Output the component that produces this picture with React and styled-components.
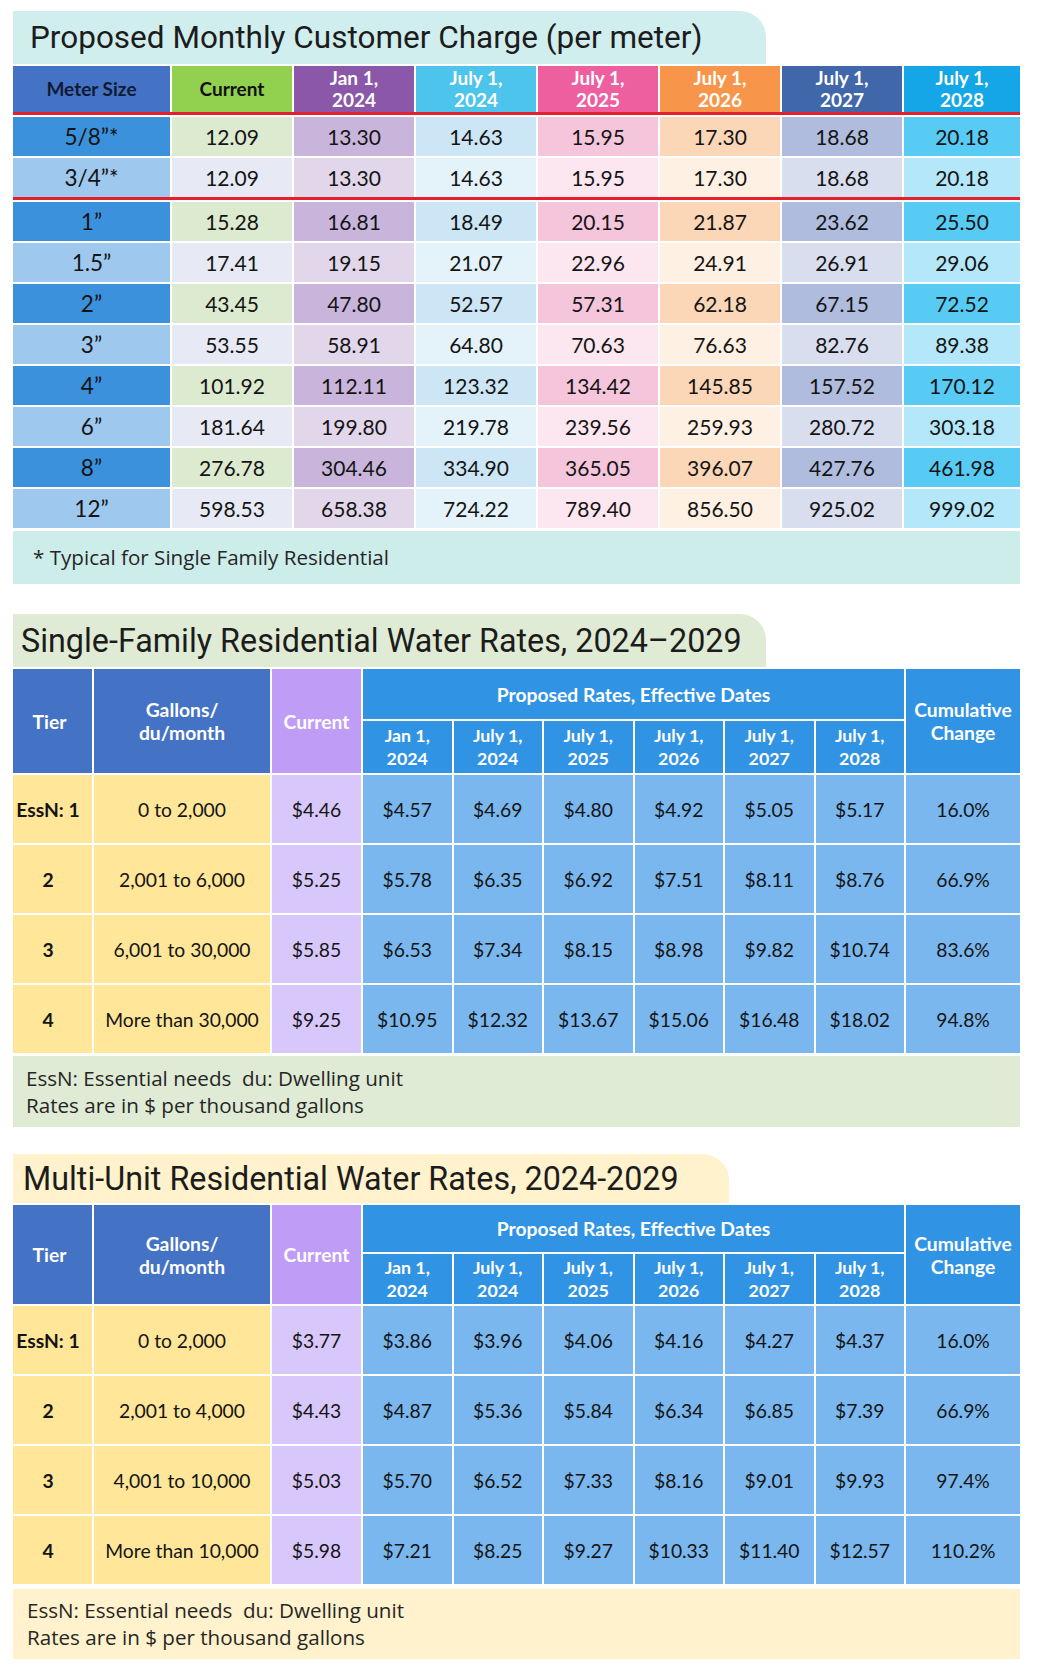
import styled, { createGlobalStyle } from "styled-components";

const GlobalStyle = createGlobalStyle`
  body {
    margin: 0;
    background: #fff;
    font-family: Lato, "Liberation Sans", sans-serif;
    color: #141414;
  }
`;

const Page = styled.div`
  width: 1039px;
  box-sizing: border-box;
  padding: 11px 19px 16px 13px;
  display: flex;
  flex-direction: column;
`;

const Section = styled.section`
  display: flex;
  flex-direction: column;
  margin-top: ${p => p.$gap || 0}px;
`;

const TitleTab = styled.h2`
  margin: 0 0 2px;
  width: ${p => p.$width}px;
  height: ${p => p.$height}px;
  box-sizing: border-box;
  padding-left: ${p => p.$indent}px;
  background: ${p => p.$bg};
  border-top-right-radius: 26px;
  display: flex;
  align-items: center;
  font-family: Roboto, "Liberation Sans", sans-serif;
  font-weight: 400;
  font-size: ${p => p.$size}px;
  color: #1c1c1c;
  white-space: nowrap;
`;

const Note = styled.div`
  margin-top: ${p => p.$gap}px;
  height: ${p => p.$height}px;
  box-sizing: border-box;
  padding-left: ${p => p.$indent}px;
  background: ${p => p.$bg};
  display: flex;
  flex-direction: column;
  justify-content: center;
  font-family: "Open Sans", "Liberation Sans", sans-serif;
  font-size: 20.6px;
  line-height: 27px;
  color: #262626;
`;

/* ---------- customer charge table ---------- */

const chargeColumns = "157px repeat(6, 120px) 116px";

const ChargeRow = styled.div`
  display: grid;
  grid-template-columns: ${chargeColumns};
  column-gap: 2px;
  height: ${p => p.$height}px;
  margin-top: ${p => p.$gap || 0}px;
`;

const ChargeHead = styled.div`
  background: ${p => p.$bg};
  color: ${p => p.$color};
  font-weight: 700;
  font-size: 19px;
  line-height: 22px;
  text-align: center;
  display: flex;
  align-items: ${p => (p.$twoLine ? "flex-start" : "center")};
  justify-content: center;
  padding-top: ${p => (p.$twoLine ? 1 : 0)}px;
  box-sizing: border-box;
`;

const ChargeCell = styled.div`
  background: ${p => p.$bg};
  display: flex;
  align-items: center;
  justify-content: center;
  font-size: ${p => (p.$label ? 22.5 : 21)}px;
  color: #141414;
`;

const RedRule = styled.div`
  height: 3px;
  background: #e3202b;
`;

/* ---------- tiered rate tables ---------- */

const rateColumns = "79px 176px 89px repeat(6, 1fr) 114px";

const RateHeadGrid = styled.div`
  display: grid;
  grid-template-columns: ${rateColumns};
  grid-template-rows: ${p => p.$rows};
  gap: 2px;
`;

const RateHead = styled.div`
  grid-row: ${p => (p.$tall ? "span 2" : "auto")};
  grid-column: ${p => (p.$wide ? "span 6" : "auto")};
  background: ${p => p.$bg};
  color: #fff;
  font-weight: 700;
  font-size: ${p => p.$size || 19.3}px;
  line-height: 23px;
  text-align: center;
  display: flex;
  align-items: center;
  justify-content: center;
  padding-right: ${p => (p.$first ? 6 : 0)}px;
`;

const RateRow = styled.div`
  display: grid;
  grid-template-columns: ${rateColumns};
  column-gap: 2px;
  height: 68px;
  margin-top: 2px;
`;

const RateCell = styled.div`
  background: ${p => p.$bg};
  font-weight: ${p => (p.$first ? 700 : 400)};
  font-size: 19.3px;
  display: flex;
  align-items: center;
  justify-content: center;
  padding-right: ${p => (p.$first ? 9 : 0)}px;
  color: #141414;
`;

/* ---------- data ---------- */

const chargeHeads = [
  { label: "Meter Size", bg: "#4472c4", color: "#111a33" },
  { label: "Current", bg: "#92d050", color: "#111" },
  { label: ["Jan 1,", "2024"], bg: "#8b57a9", color: "#fff" },
  { label: ["July 1,", "2024"], bg: "#4cc4ec", color: "#fff" },
  { label: ["July 1,", "2025"], bg: "#ee5fa0", color: "#fff" },
  { label: ["July 1,", "2026"], bg: "#f7964a", color: "#fff" },
  { label: ["July 1,", "2027"], bg: "#4067aa", color: "#fff" },
  { label: ["July 1,", "2028"], bg: "#14a6e6", color: "#fff" },
];

const shadeDark = ["#3b91dc", "#dcead0", "#c9b5dc", "#cce6f5", "#f5c6db", "#fbd7b8", "#b0bcdd", "#57cbf4"];
const shadeLight = ["#9fc8ee", "#e7eaf5", "#e2d6eb", "#e4f2fa", "#fce6f0", "#fef0e2", "#d9deee", "#b3e7f9"];

const q = "\u201D";

const meters = [
  [`5/8${q}*`, "12.09", "13.30", "14.63", "15.95", "17.30", "18.68", "20.18"],
  [`3/4${q}*`, "12.09", "13.30", "14.63", "15.95", "17.30", "18.68", "20.18"],
  [`1${q}`, "15.28", "16.81", "18.49", "20.15", "21.87", "23.62", "25.50"],
  [`1.5${q}`, "17.41", "19.15", "21.07", "22.96", "24.91", "26.91", "29.06"],
  [`2${q}`, "43.45", "47.80", "52.57", "57.31", "62.18", "67.15", "72.52"],
  [`3${q}`, "53.55", "58.91", "64.80", "70.63", "76.63", "82.76", "89.38"],
  [`4${q}`, "101.92", "112.11", "123.32", "134.42", "145.85", "157.52", "170.12"],
  [`6${q}`, "181.64", "199.80", "219.78", "239.56", "259.93", "280.72", "303.18"],
  [`8${q}`, "276.78", "304.46", "334.90", "365.05", "396.07", "427.76", "461.98"],
  [`12${q}`, "598.53", "658.38", "724.22", "789.40", "856.50", "925.02", "999.02"],
];

const dates = [
  ["Jan 1,", "2024"],
  ["July 1,", "2024"],
  ["July 1,", "2025"],
  ["July 1,", "2026"],
  ["July 1,", "2027"],
  ["July 1,", "2028"],
];

const singleFamily = [
  ["EssN: 1", "0 to 2,000", "$4.46", "$4.57", "$4.69", "$4.80", "$4.92", "$5.05", "$5.17", "16.0%"],
  ["2", "2,001 to 6,000", "$5.25", "$5.78", "$6.35", "$6.92", "$7.51", "$8.11", "$8.76", "66.9%"],
  ["3", "6,001 to 30,000", "$5.85", "$6.53", "$7.34", "$8.15", "$8.98", "$9.82", "$10.74", "83.6%"],
  ["4", "More than 30,000", "$9.25", "$10.95", "$12.32", "$13.67", "$15.06", "$16.48", "$18.02", "94.8%"],
];

const multiUnit = [
  ["EssN: 1", "0 to 2,000", "$3.77", "$3.86", "$3.96", "$4.06", "$4.16", "$4.27", "$4.37", "16.0%"],
  ["2", "2,001 to 4,000", "$4.43", "$4.87", "$5.36", "$5.84", "$6.34", "$6.85", "$7.39", "66.9%"],
  ["3", "4,001 to 10,000", "$5.03", "$5.70", "$6.52", "$7.33", "$8.16", "$9.01", "$9.93", "97.4%"],
  ["4", "More than 10,000", "$5.98", "$7.21", "$8.25", "$9.27", "$10.33", "$11.40", "$12.57", "110.2%"],
];

const rateBg = i => (i < 2 ? "#ffe699" : i === 2 ? "#d8c7fa" : "#79b7ee");

const Lines = ({ parts }) =>
  Array.isArray(parts) ? (
    <span>
      {parts[0]}
      <br />
      {parts[1]}
    </span>
  ) : (
    parts
  );

const ChargeTable = () => (
  <div>
    <ChargeRow $height={46}>
      {chargeHeads.map((h, i) => (
        <ChargeHead key={i} $bg={h.bg} $color={h.color} $twoLine={Array.isArray(h.label)}>
          <Lines parts={h.label} />
        </ChargeHead>
      ))}
    </ChargeRow>
    <RedRule />
    {meters.map((row, r) => (
      <div key={r}>
        <ChargeRow $height={39} $gap={2}>
          {row.map((v, c) => (
            <ChargeCell key={c} $label={c === 0} $bg={r % 2 === 0 ? shadeDark[c] : shadeLight[c]}>
              {v}
            </ChargeCell>
          ))}
        </ChargeRow>
        {r === 1 && <RedRule />}
      </div>
    ))}
  </div>
);

const RateTable = ({ rows, headRows }) => (
  <div>
    <RateHeadGrid $rows={headRows}>
      <RateHead $tall $first $bg="#4472c4">Tier</RateHead>
      <RateHead $tall $bg="#4472c4">
        <Lines parts={["Gallons/", "du/month"]} />
      </RateHead>
      <RateHead $tall $bg="#bf9df6">Current</RateHead>
      <RateHead $wide $bg="#3193e3">Proposed Rates, Effective Dates</RateHead>
      <RateHead $tall $bg="#3193e3">
        <Lines parts={["Cumulative", "Change"]} />
      </RateHead>
      {dates.map((d, i) => (
        <RateHead key={i} $bg="#3193e3" $size={17.8}>
          <Lines parts={d} />
        </RateHead>
      ))}
    </RateHeadGrid>
    {rows.map((row, r) => (
      <RateRow key={r}>
        {row.map((v, c) => (
          <RateCell key={c} $bg={rateBg(c)} $first={c === 0}>
            {v}
          </RateCell>
        ))}
      </RateRow>
    ))}
  </div>
);

export default function App() {
  return (
    <Page>
      <GlobalStyle />
      <Section>
        <TitleTab $width={753} $height={53} $indent={17} $size={31.5} $bg="#d1eeee">
          Proposed Monthly Customer Charge (per meter)
        </TitleTab>
        <ChargeTable />
        <Note $gap={3} $height={53} $indent={20} $bg="#cdedeb">
          * Typical for Single Family Residential
        </Note>
      </Section>

      <Section $gap={30}>
        <TitleTab $width={753} $height={53} $indent={8} $size={32.3} $bg="#dfebd5">
          Single-Family Residential Water Rates, 2024–2029
        </TitleTab>
        <RateTable rows={singleFamily} headRows="50px 52px" />
        <Note $gap={3} $height={71} $indent={13} $bg="#dfebd5">
          <span>EssN: Essential needs&nbsp; du: Dwelling unit</span>
          <span>Rates are in $ per thousand gallons</span>
        </Note>
      </Section>

      <Section $gap={27}>
        <TitleTab $width={716} $height={49} $indent={10} $size={32.3} $bg="#fff2cc">
          Multi-Unit Residential Water Rates, 2024-2029
        </TitleTab>
        <RateTable rows={multiUnit} headRows="47px 50px" />
        <Note $gap={5} $height={70} $indent={14} $bg="#fff2cc">
          <span>EssN: Essential needs&nbsp; du: Dwelling unit</span>
          <span>Rates are in $ per thousand gallons</span>
        </Note>
      </Section>
    </Page>
  );
}
